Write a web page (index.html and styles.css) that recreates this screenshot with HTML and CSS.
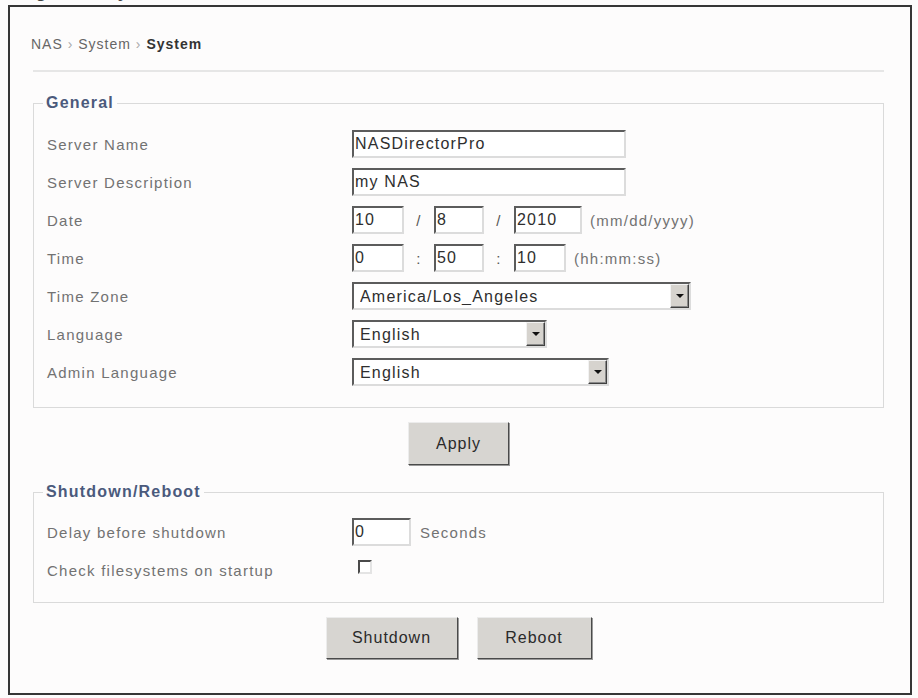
FILE: index.html
```html
<!DOCTYPE html>
<html lang="en">
<head>
    <meta charset="UTF-8">
    <meta name="viewport" content="width=device-width, initial-scale=1.0">
    <title>NAS - System</title>
    <link rel="stylesheet" href="styles.css">
</head>
<body>
    <div class="caption"><span>Figure 5-1 System Screen</span></div>
    <div class="frame">
        <div class="crumbs">NAS <span class="arrow">&rsaquo;</span> System <span class="arrow">&rsaquo;</span> <b>System</b></div>
        <hr class="rule">

        <form>
            <fieldset class="group">
                <legend>General</legend>
                <div class="row">
                    <span class="label">Server Name</span>
                    <input class="field w-name" type="text" value="NASDirectorPro">
                </div>
                <div class="row">
                    <span class="label">Server Description</span>
                    <input class="field w-name" type="text" value="my NAS">
                </div>
                <div class="row">
                    <span class="label">Date</span>
                    <input class="field w-52" type="text" value="10">
                    <span class="sep">/</span>
                    <input class="field w-50" type="text" value="8">
                    <span class="sep">/</span>
                    <input class="field w-68" type="text" value="2010">
                    <span class="hint">(mm/dd/yyyy)</span>
                </div>
                <div class="row">
                    <span class="label">Time</span>
                    <input class="field w-52" type="text" value="0">
                    <span class="sep">:</span>
                    <input class="field w-50" type="text" value="50">
                    <span class="sep">:</span>
                    <input class="field w-52" type="text" value="10">
                    <span class="hint">(hh:mm:ss)</span>
                </div>
                <div class="row">
                    <span class="label">Time Zone</span>
                    <span class="select w-zone">
                        <select><option>America/Los_Angeles</option></select>
                        <span class="drop"></span>
                    </span>
                </div>
                <div class="row">
                    <span class="label">Language</span>
                    <span class="select w-lang">
                        <select><option>English</option></select>
                        <span class="drop"></span>
                    </span>
                </div>
                <div class="row">
                    <span class="label">Admin Language</span>
                    <span class="select w-admin">
                        <select><option>English</option></select>
                        <span class="drop"></span>
                    </span>
                </div>
            </fieldset>

            <div class="actions">
                <button type="button" class="btn btn-apply">Apply</button>
            </div>

            <fieldset class="group group-power">
                <legend>Shutdown/Reboot</legend>
                <div class="row">
                    <span class="label">Delay before shutdown</span>
                    <input class="field w-delay" type="text" value="0">
                    <span class="hint unit">Seconds</span>
                </div>
                <div class="row">
                    <span class="label">Check filesystems on startup</span>
                    <input class="check" type="checkbox">
                </div>
            </fieldset>

            <div class="actions">
                <button type="button" class="btn btn-shutdown">Shutdown</button>
                <button type="button" class="btn btn-reboot">Reboot</button>
            </div>
        </form>
    </div>
</body>
</html>
```

FILE: styles.css
```css
body {
    margin: 0;
    background-color: #fdfcfc;
    font-family: "Liberation Sans", Arial, sans-serif;
    color: #727272;
}

/* caption of the figure, cut off by the top edge */
.caption {
    height: 5px;
    overflow: hidden;
    padding-left: 22px;
}

.caption span {
    display: block;
    margin-top: -16px;
    line-height: 18px;
    font-size: 17px;
    font-weight: bold;
    font-style: italic;
    color: #444;
}

.frame {
    box-sizing: border-box;
    width: 904px;
    height: 690px;
    margin-left: 8px;
    padding: 27px 26px 0 23px;
    border: 2px solid #363636;
    background-color: #fdfcfc;
}

.crumbs {
    margin-left: -2px;
    line-height: 20px;
    font-size: 14px;
    letter-spacing: 1px;
    color: #666;
}

.crumbs .arrow {
    color: #aaa;
}

.crumbs b {
    color: #333;
}

.rule {
    height: 0;
    margin: 16px 0 0;
    border: 0;
    border-top: 2px solid #e6e6e6;
}

.group {
    min-width: 0;
    margin: 21px 0 0;
    padding: 12px 12px 16px 9px;
    border: 1px solid #dadada;
}

.group-power {
    margin-top: 17px;
    padding-top: 11px;
    padding-bottom: 13px;
}

legend {
    padding: 0 3px;
    line-height: 20px;
    font-size: 16px;
    font-weight: bold;
    letter-spacing: 1.2px;
    color: #4b5a7c;
}

.row {
    display: flex;
    align-items: center;
    height: 38px;
    padding-left: 4px;
    font-size: 15px;
    letter-spacing: 1.25px;
}

.label {
    flex: 0 0 305px;
}

.field {
    box-sizing: border-box;
    height: 28px;
    margin: 0;
    padding: 0 1px;
    border: 2px solid;
    border-color: #5c5c5c #dcdcdc #dcdcdc #5c5c5c;
    background-color: #fff;
    font-family: "Liberation Sans", Arial, sans-serif;
    font-size: 16px;
    letter-spacing: 1.2px;
    color: #2e2e2e;
    outline: none;
}

.w-name { width: 274px; }
.w-52 { width: 52px; }
.w-50 { width: 50px; }
.w-68 { width: 68px; }
.w-delay { width: 59px; }

.sep {
    width: 30px;
    text-align: center;
    color: #555;
}

.hint {
    margin-left: 8px;
}

.unit {
    margin-left: 9px;
}

.select {
    box-sizing: border-box;
    display: flex;
    height: 28px;
    border: 2px solid;
    border-color: #5c5c5c #dcdcdc #dcdcdc #5c5c5c;
    background-color: #fff;
}

.w-zone { width: 339px; }
.w-lang { width: 195px; }
.w-admin { width: 257px; }

.select select {
    flex: 1;
    min-width: 0;
    margin: 0;
    padding: 0 0 0 6px;
    border: 0;
    background: transparent;
    appearance: none;
    -webkit-appearance: none;
    font-family: "Liberation Sans", Arial, sans-serif;
    font-size: 16px;
    letter-spacing: 1.2px;
    color: #2e2e2e;
    outline: none;
}

.drop {
    box-sizing: border-box;
    display: flex;
    align-items: center;
    justify-content: center;
    width: 19px;
    border: 1px solid;
    border-color: #f2f2f2 #404040 #404040 #f2f2f2;
    box-shadow: inset -1px -1px 0 #8a8a8a;
    background-color: #d6d3ce;
}

.drop::after {
    content: "";
    border-top: 4px solid #111;
    border-left: 4px solid transparent;
    border-right: 4px solid transparent;
}

.check {
    box-sizing: border-box;
    width: 14px;
    height: 14px;
    margin: 0 0 6px 6px;
    border: 2px solid;
    border-color: #4a4a4a #e4e4e4 #e4e4e4 #4a4a4a;
    background-color: #fff;
    appearance: none;
    -webkit-appearance: none;
}

.actions {
    display: flex;
    justify-content: center;
    gap: 19px;
    margin-top: 14px;
}

.btn {
    box-sizing: border-box;
    height: 43px;
    padding: 0;
    border: 1px solid;
    border-color: #ececec #4a4a4a #4a4a4a #ececec;
    box-shadow: 1px 1px 0 #9a9a9a;
    background-color: #d7d5d1;
    font-family: "Liberation Sans", Arial, sans-serif;
    font-size: 16px;
    letter-spacing: 1px;
    color: #2a2a2a;
}

.btn-apply { width: 101px; }
.btn-shutdown { width: 132px; height: 42px; }
.btn-reboot { width: 115px; height: 42px; }
```
